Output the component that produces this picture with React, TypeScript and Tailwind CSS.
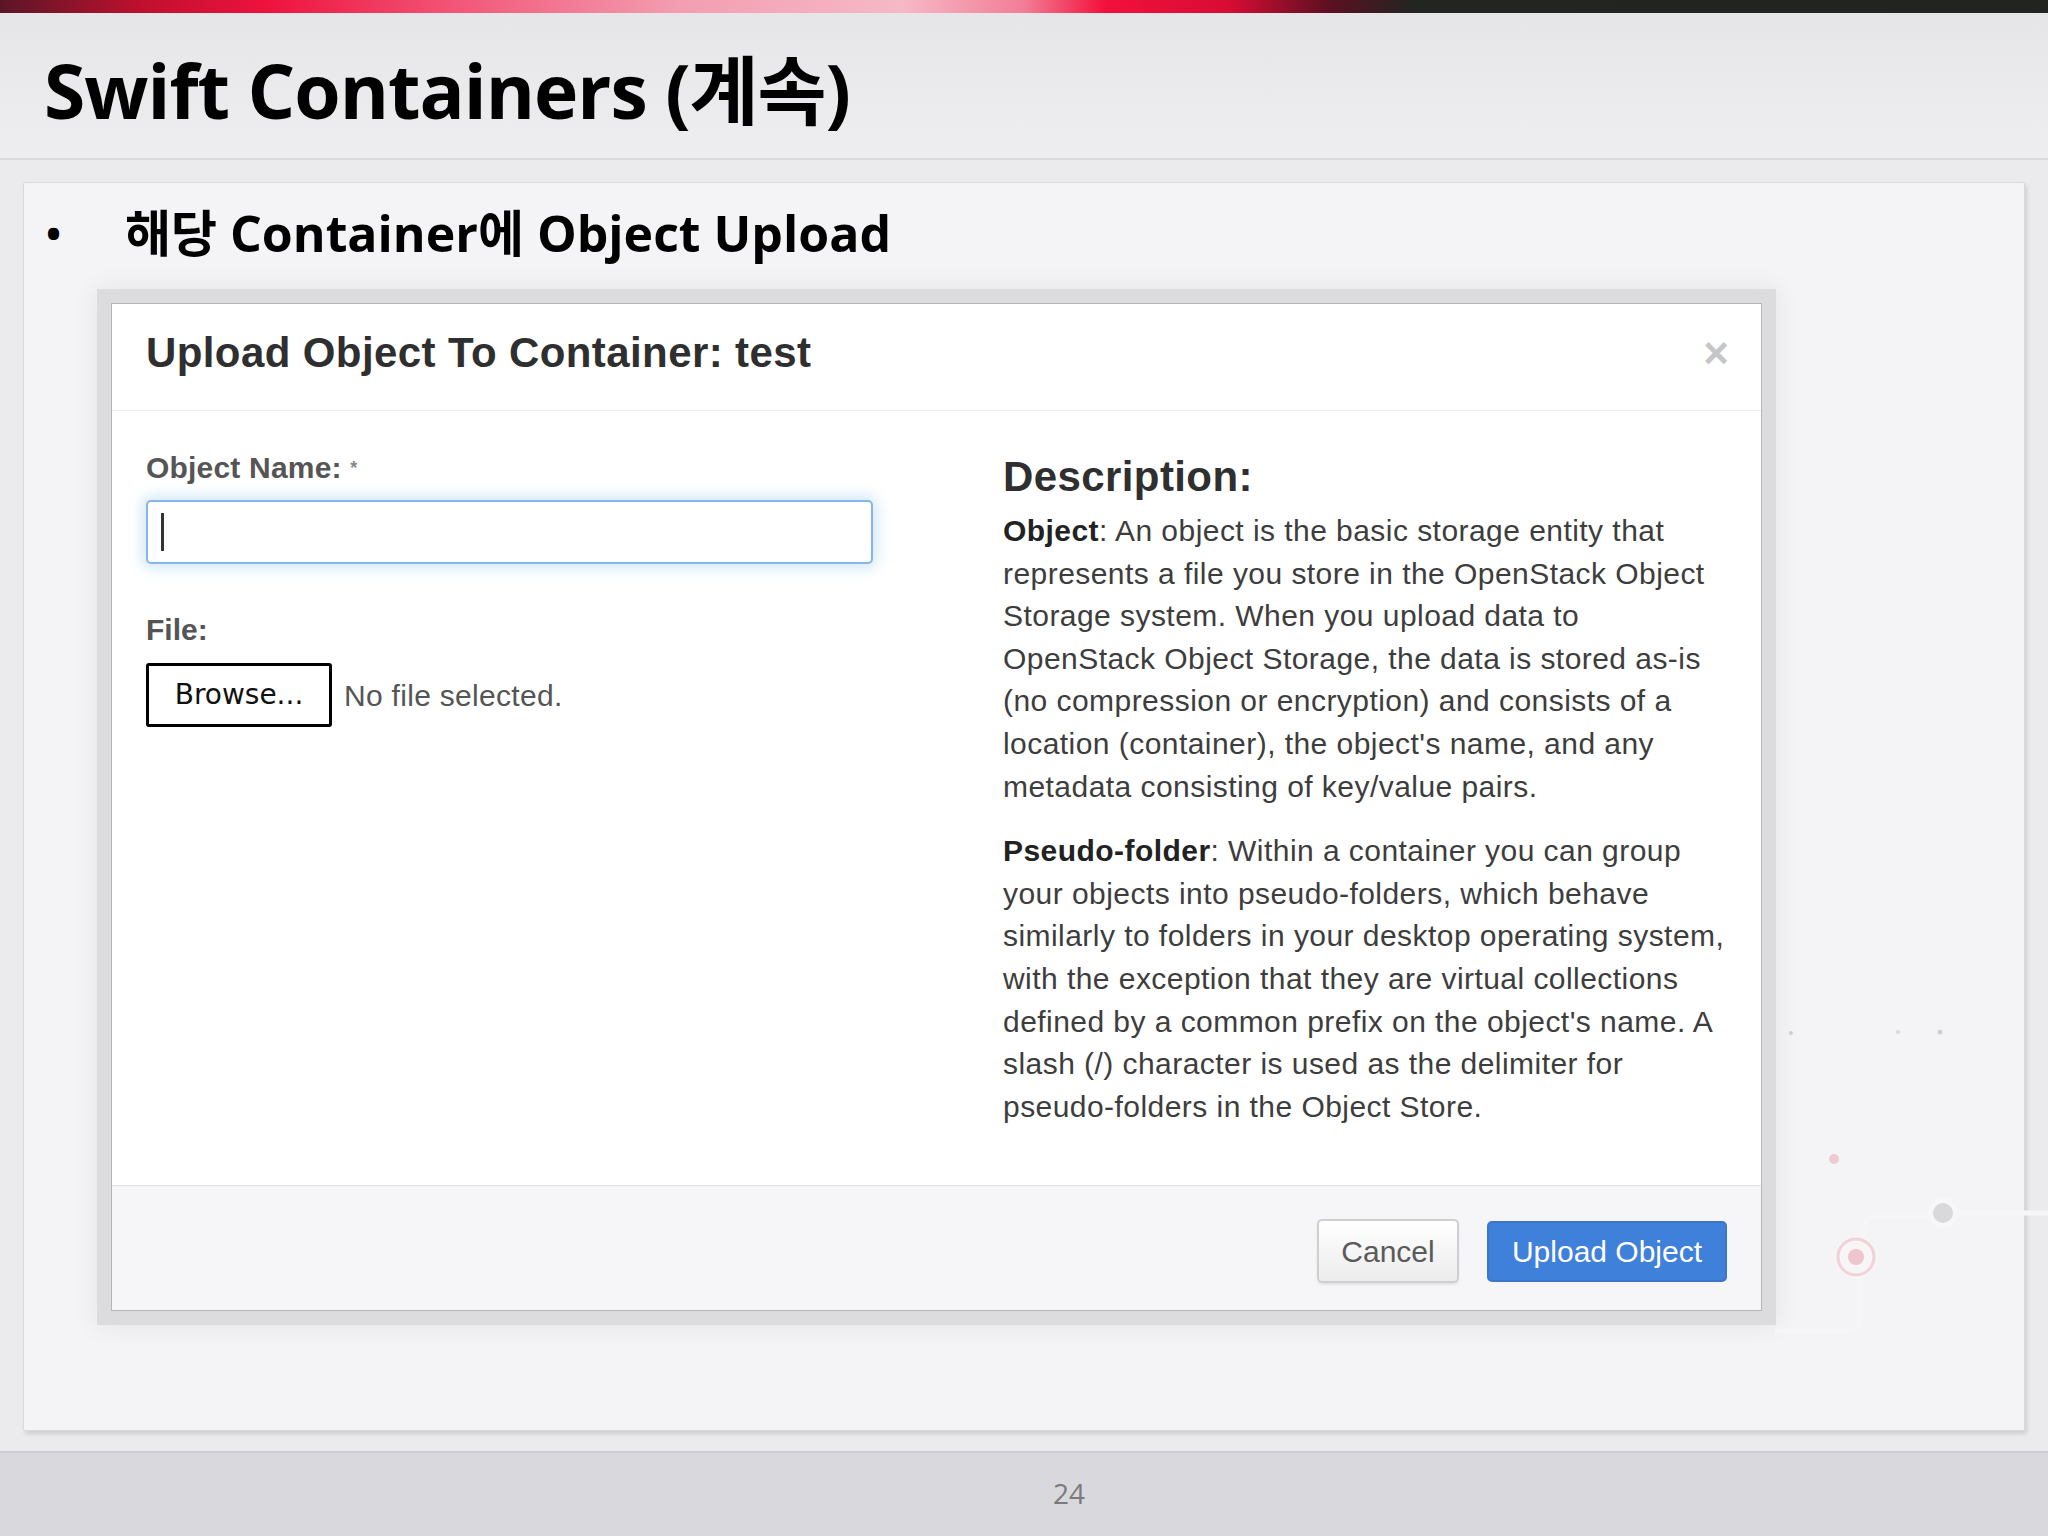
import React from "react";

const desc1 = [
  "An object is the basic storage entity that",
  "represents a file you store in the OpenStack Object",
  "Storage system. When you upload data to",
  "OpenStack Object Storage, the data is stored as-is",
  "(no compression or encryption) and consists of a",
  "location (container), the object's name, and any",
  "metadata consisting of key/value pairs.",
];

const desc2 = [
  "Within a container you can group",
  "your objects into pseudo-folders, which behave",
  "similarly to folders in your desktop operating system,",
  "with the exception that they are virtual collections",
  "defined by a common prefix on the object's name. A",
  "slash (/) character is used as the delimiter for",
  "pseudo-folders in the Object Store.",
];

function Paragraph({ term, lines }: { term: string; lines: string[] }) {
  return (
    <p className="text-[30px] leading-[42.6px] tracking-[0.45px] text-[#3d3d3d]">
      {lines.map((line, i) => (
        <span key={i} className="block whitespace-nowrap">
          {i === 0 && <b className="font-bold text-[#222]">{term}</b>}
          {i === 0 ? ": " : ""}
          {line}
        </span>
      ))}
    </p>
  );
}

function Decor() {
  return (
    <svg className="pointer-events-none absolute left-0 top-0" width="2048" height="1536" viewBox="0 0 2048 1536">
      <path d="M1775 1331 H1846 Q1860 1331 1860 1317 V1271" stroke="#f6f6f8" strokeWidth="5" fill="none" />
      <path d="M1864 1241 V1229 Q1864 1215 1878 1215 H1928 M1958 1213 H2048" stroke="#f6f6f8" strokeWidth="5" fill="none" />
      <circle cx="1856" cy="1257" r="22" fill="#f7f5f6" />
      <circle cx="1856" cy="1257" r="18" fill="none" stroke="#f0d2d9" strokeWidth="3" />
      <circle cx="1856" cy="1257" r="8" fill="#efc6cf" />
      <circle cx="1943" cy="1213" r="15" fill="#f7f7f9" />
      <circle cx="1943" cy="1213" r="10" fill="#d9d9dc" />
      <circle cx="1834" cy="1159" r="5" fill="#efc9d2" />
      <circle cx="1791" cy="1033" r="2" fill="#cfcfd3" />
      <circle cx="1898" cy="1032" r="2" fill="#d8d8dc" />
      <circle cx="1940" cy="1032" r="2.5" fill="#cfcfd3" />
    </svg>
  );
}

function Dialog() {
  return (
    <div className="flex h-[1008px] w-[1651px] flex-col border border-[#b5b5b5] bg-white font-['Liberation_Sans',Arial,sans-serif] shadow-[0_0_0_14px_#dcdcde,0_0_24px_16px_rgba(0,0,0,0.06)]">
      <div className="flex h-[107px] items-center justify-between border-b border-[#ececec] pb-[8px] pl-[34px] pr-[32px]">
        <h3 className="text-[42px] font-bold leading-none tracking-[0.4px] text-[#2f2f2f]">
          Upload Object To Container: test
        </h3>
        <span className="text-[44px] font-bold leading-none text-[#c6c6c6]">×</span>
      </div>

      <div className="flex h-[774px] px-[34px]">
        <div className="w-[727px] pt-[35px]">
          <label className="block text-[30px] font-bold leading-[44px] tracking-[0.2px] text-[#555]">
            Object Name: <span className="align-top text-[18px] text-[#888]">*</span>
          </label>
          <div className="mt-[10px] flex h-[64px] items-center rounded-[5px] border-2 border-[#86b6e8] bg-white pl-[13px] shadow-[0_0_14px_4px_rgba(102,175,233,0.3)]">
            <span className="h-[38px] w-[3px] bg-[#333]" />
          </div>
          <label className="mt-[44px] block text-[30px] font-bold leading-[44px] text-[#555]">File:</label>
          <div className="mt-[11px] flex items-center gap-[12px]">
            <button className="flex h-[64px] w-[186px] items-center justify-center rounded-[3px] border-[3px] border-black bg-white font-['DejaVu_Sans',sans-serif] text-[28px] text-[#111]">
              Browse...
            </button>
            <span className="text-[30px] tracking-[0.3px] text-[#555]">No file selected.</span>
          </div>
        </div>

        <div className="ml-[130px] pt-[42px]">
          <h3 className="text-[42px] font-bold leading-[48px] tracking-[0.4px] text-[#2f2f2f]">Description:</h3>
          <div className="mt-[9px] flex flex-col gap-[22px]">
            <Paragraph term="Object" lines={desc1} />
            <Paragraph term="Pseudo-folder" lines={desc2} />
          </div>
        </div>
      </div>

      <div className="flex flex-1 items-center justify-end gap-[28px] border-t border-[#e3e3e3] bg-[#f6f5f8] pr-[34px] pt-[6px]">
        <button className="flex h-[64px] w-[142px] items-center justify-center rounded-[5px] border-2 border-[#cfcfcf] bg-[linear-gradient(#ffffff,#ececec)] text-[30px] text-[#5a5a5a] shadow-[0_2px_2px_rgba(0,0,0,0.08)]">
          Cancel
        </button>
        <button className="flex h-[61px] w-[240px] items-center justify-center rounded-[5px] border-2 border-[#3b76c9] bg-[#3f80db] text-[30px] text-white">
          Upload Object
        </button>
      </div>
    </div>
  );
}

export default function App() {
  return (
    <div className="relative flex h-[1536px] w-[2048px] flex-col overflow-hidden bg-[#ebebed]">
      <div className="h-[13px] bg-[linear-gradient(90deg,#5a1626_0%,#c0102e_7%,#ee123d_13%,#f25476_22%,#f39db0_33%,#f6b9c6_44%,#f27d96_50%,#f2103b_54%,#d80c34_60%,#5a1020_65%,#232523_69%,#222422_100%)]" />

      <header className="flex h-[147px] items-center border-b-2 border-[#dcdcde] bg-[linear-gradient(180deg,#e6e6e8,#eeeef0)] pl-[44px] pt-[10px]">
        <h1 className="font-['Open_Sans','Noto_Sans_CJK_KR',sans-serif] text-[75px] font-bold leading-none tracking-[-1px] text-black">
          Swift Containers (계속)
        </h1>
      </header>

      <div className="flex h-[1291px] flex-col px-[23px] pt-[22px]">
        <div className="flex h-[1249px] flex-col rounded-[2px] border border-[#dadadc] bg-[#f4f4f6] shadow-[2px_3px_4px_rgba(0,0,0,0.12)]">
          <div className="flex h-[98px] items-center pt-[2px] font-['Open_Sans','Noto_Sans_CJK_KR',sans-serif] font-bold text-black">
            <span className="w-[101px] pl-[22px] text-[40px] leading-none">•</span>
            <span className="text-[50px] leading-none">해당 Container에 Object Upload</span>
          </div>
          <div className="pl-[87px] pt-[22px]">
            <Dialog />
          </div>
        </div>
      </div>

      <footer className="flex flex-1 items-center justify-center border-t-2 border-[#cdccd0] bg-[#d9d8dc] pb-[4px] pl-[90px]">
        <span className="font-['Open_Sans',sans-serif] text-[28px] text-[#7a7a7a]">24</span>
      </footer>

      <Decor />
    </div>
  );
}
